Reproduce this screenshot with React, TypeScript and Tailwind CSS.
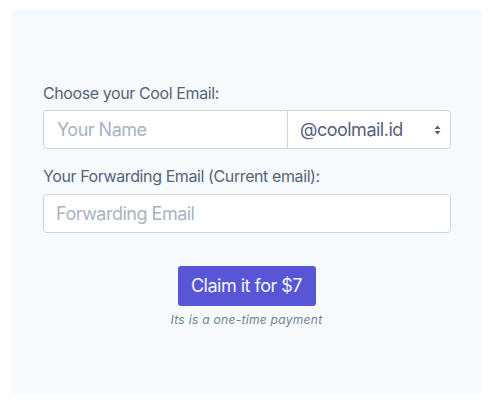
import React from "react";

export default function App() {
  return (
    <div className="w-[493px] h-[405px] bg-white pt-[10px] pl-[11px]" style={{ fontFamily: "Inter, 'Noto Sans', sans-serif" }}>
      <div className="w-[471px] h-[383px] bg-[#f7fafc] px-8 pt-[71px]">
        <label className="block text-[16px] leading-[24px] tracking-[-0.4px] text-[#56627a] mb-[5px]">Choose your Cool Email:</label>
        <div className="flex h-[39px] w-[408px] rounded border border-[#cbd5e0] bg-white">
          <input
            type="text"
            placeholder="Your Name"
            className="w-[243px] h-full px-[13px] text-[18px] tracking-[-0.5px] text-[#56627a] placeholder:text-[#a8b3c4] bg-transparent outline-none rounded-l"
          />
          <div className="relative flex-1 border-l border-[#cbd5e0]">
            <select className="w-full h-full appearance-none bg-transparent pl-[12px] pr-8 text-[18px] tracking-[-0.5px] text-[#56627a] outline-none">
              <option>@coolmail.id</option>
            </select>
            <svg className="absolute right-[9px] top-[14px] pointer-events-none" width="7" height="10" viewBox="0 0 7 10">
              <path d="M3.5 0.5 L6.5 4 L0.5 4 Z" fill="#56627a" />
              <path d="M3.5 9.5 L6.5 6 L0.5 6 Z" fill="#56627a" />
            </svg>
          </div>
        </div>
        <label className="block mt-[15px] text-[16px] leading-[24px] tracking-[-0.4px] text-[#56627a] mb-[6px]">Your Forwarding Email (Current email):</label>
        <input
          type="text"
          placeholder="Forwarding Email"
          className="block w-[408px] h-[39px] rounded border border-[#cbd5e0] bg-white px-[12px] text-[18px] tracking-[-0.5px] text-[#56627a] placeholder:text-[#a8b3c4] outline-none"
        />
        <div className="flex flex-col items-center mt-[33px]">
          <button className="h-[40px] w-[138px] rounded-[3px] bg-[#5856d6] text-[#f4f4ff] text-[18px] tracking-[-0.5px] leading-none">Claim it for $7</button>
          <p className="mt-[5px] text-[12px] leading-[18px] italic text-[#718096] tracking-[0.3px]">Its is a one-time payment</p>
        </div>
      </div>
    </div>
  );
}
